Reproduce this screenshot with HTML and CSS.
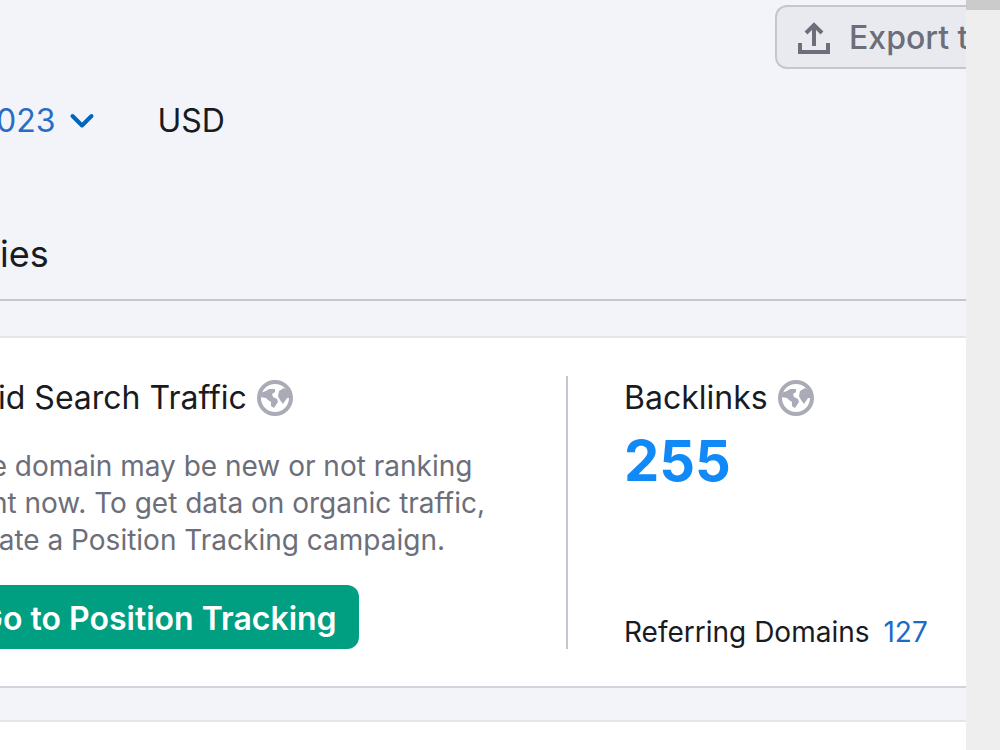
FILE: index.html
```html
<!DOCTYPE html>
<html lang="en">
<head>
    <meta charset="utf-8">
    <title>Domain Overview</title>
    <link rel="stylesheet" href="styles.css">
</head>
<body>
    <main class="content">
        <div class="toolbar">
            <button class="export" type="button">
                <svg width="34" height="34" viewBox="0 0 34 34" fill="none" stroke="#6c6e79" stroke-width="4">
                    <path d="M17 25V4M9 12L17 4L25 12"/>
                    <path d="M3 22V31H31V22"/>
                </svg>
                <span>Export t</span>
            </button>
        </div>
        <div class="filters">
            <button class="date" type="button">
                <span>023</span>
                <svg width="26" height="18" viewBox="0 0 26 18" fill="none" stroke="#0066bb" stroke-width="4" stroke-linecap="round" stroke-linejoin="round">
                    <path d="M3.500 4L13 13.500L22.500 4"/>
                </svg>
            </button>
            <span class="currency">USD</span>
        </div>
        <nav class="tabs">
            <a class="tab" href="#">ies</a>
        </nav>

        <section class="card">
            <div class="paid">
                <h2 class="title">
                    <span>id Search Traffic</span>
                    <svg class="globe" width="36" height="36" viewBox="0 0 36 36">
                        <circle cx="18" cy="18" r="16" fill="none" stroke="#a9abb6" stroke-width="4"/>
                        <path fill="#a9abb6" d="M3 13L9 11L12 9L18 9L18 12L15 14L16 17L20 19L21 22L17 28L14 26L14 22L11 20L9 18L3 17ZM22 11L27 8L33 12L34 18L30 18L26 24L23 20L21 16Z"/>
                    </svg>
                </h2>
                <p class="note">The domain may be new or not ranking<br>right now. To get data on organic traffic,<br>create a Position Tracking campaign.</p>
                <button class="go" type="button">Go to Position Tracking</button>
            </div>
            <div class="backlinks">
                <h2 class="title">
                    <span>Backlinks</span>
                    <svg class="globe" width="36" height="36" viewBox="0 0 36 36">
                        <circle cx="18" cy="18" r="16" fill="none" stroke="#a9abb6" stroke-width="4"/>
                        <path fill="#a9abb6" d="M3 13L9 11L12 9L18 9L18 12L15 14L16 17L20 19L21 22L17 28L14 26L14 22L11 20L9 18L3 17ZM22 11L27 8L33 12L34 18L30 18L26 24L23 20L21 16Z"/>
                    </svg>
                </h2>
                <a class="total" href="#">255</a>
                <div class="referring">
                    <span>Referring Domains</span>
                    <a href="#">127</a>
                </div>
            </div>
        </section>
        <section class="card next"></section>
    </main>
    <div class="scrollbar">
        <div class="thumb"></div>
    </div>
</body>
</html>
```
FILE: styles.css
```css
* {
    box-sizing: border-box;
}

body {
    margin: 0;
    height: 100vh;
    display: flex;
    overflow: hidden;
    font-family: Inter, "Liberation Sans", sans-serif;
    font-size: 32px;
    line-height: 40px;
    color: #191b23;
    background-color: #f3f4f9;
}

button {
    font-family: inherit;
    font-size: 32px;
    line-height: 40px;
    border: none;
    background: none;
    padding: 0;
    cursor: pointer;
}

a {
    color: #1a6cc8;
    text-decoration: none;
}

svg {
    flex-shrink: 0;
}

.content {
    flex: 1;
    min-width: 0;
    display: flex;
    flex-direction: column;
    overflow: hidden;
}

.scrollbar {
    width: 34px;
    background-color: #eeeeee;
}

.thumb {
    height: 10px;
    background-color: #cbcbcb;
}

.toolbar {
    display: flex;
    justify-content: flex-end;
    padding-top: 5px;
}

.export {
    display: flex;
    align-items: center;
    gap: 18px;
    width: 191px;
    height: 64px;
    padding: 1px 0 0 20px;
    overflow: hidden;
    white-space: nowrap;
    font-weight: 500;
    color: #6c6e79;
    background-color: #e9eaf0;
    border: 2px solid #c4c7cf;
    border-right: none;
    border-radius: 12px 0 0 12px;
}

.filters {
    display: flex;
    gap: 62px;
    margin-left: -4px;
    padding-top: 32px;
}

.date {
    display: flex;
    align-items: center;
    gap: 14px;
    color: #2a6cc4;
}

.tabs {
    padding: 93px 0 23px;
    border-bottom: 2px solid #c4c7cf;
}

.tab {
    font-size: 36px;
    color: #191b23;
}

.card {
    display: flex;
    margin-top: 35px;
    padding: 38px 0 37px;
    background-color: #fff;
    border-top: 2px solid #e4e5eb;
    border-bottom: 2px solid #d1d4db;
}

.next {
    flex: 1;
    margin-top: 32px;
    border-bottom: none;
}

.title {
    display: flex;
    align-items: center;
    gap: 10px;
    margin: 0;
    font-size: 32px;
    font-weight: 400;
    line-height: 44px;
}

.paid {
    flex: 1;
    border-right: 2px solid #c4c7cf;
}

.paid .title {
    margin-left: -2px;
}

.note {
    margin: 28px 0 26px -44px;
    font-size: 28px;
    line-height: 37px;
    color: #6c6e79;
    white-space: nowrap;
}

.go {
    display: block;
    height: 64px;
    margin-left: -21px;
    padding: 4px 22px 0 0;
    font-weight: 600;
    color: #fff;
    background-color: #009f81;
    border-radius: 12px;
}

.backlinks {
    width: 398px;
    padding-left: 56px;
    display: flex;
    flex-direction: column;
}

.total {
    font-size: 56px;
    font-weight: 700;
    line-height: 64px;
    margin-top: 9px;
    color: #118af7;
}

.referring {
    display: flex;
    gap: 14px;
    margin-top: auto;
    font-size: 28px;
    line-height: 34px;
}
```
